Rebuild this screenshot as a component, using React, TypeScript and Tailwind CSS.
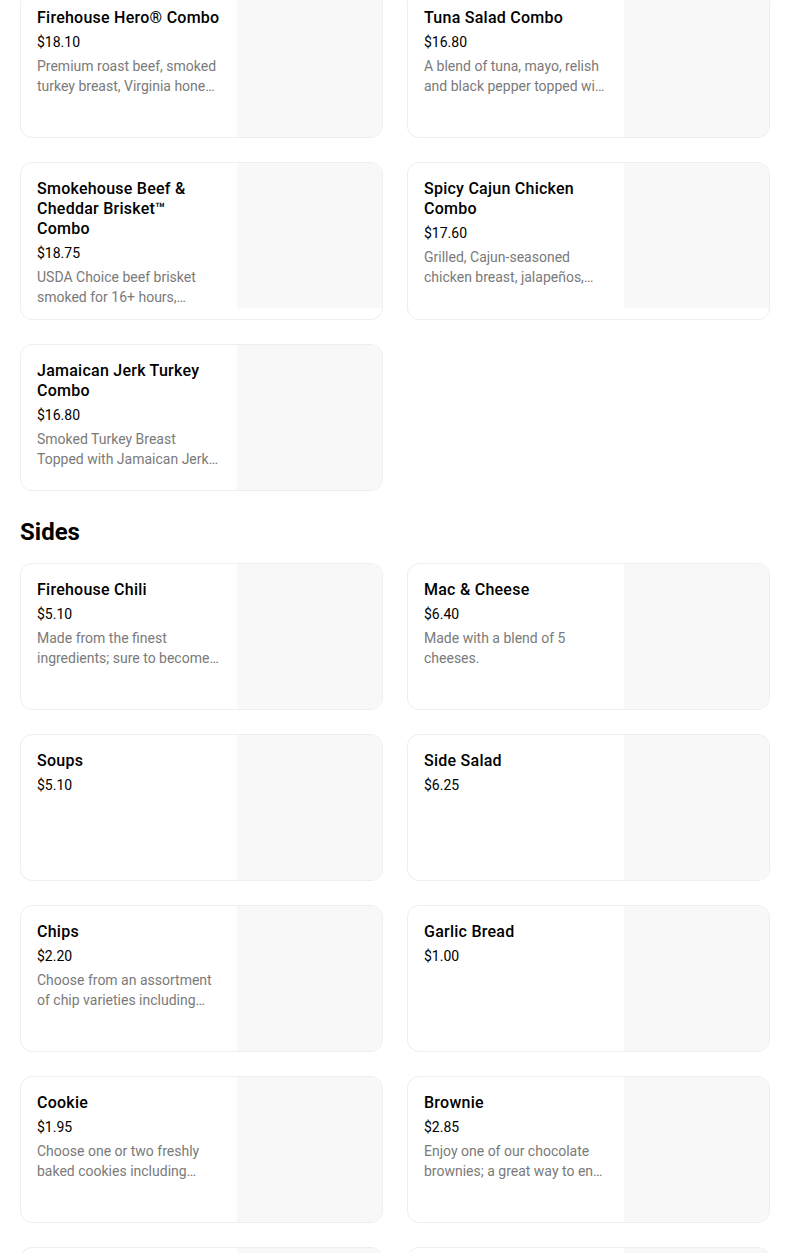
import React from "react";

type Item = { title: string; price: string; desc?: string };

const combos: Item[] = [
  { title: "Firehouse Hero® Combo", price: "$18.10", desc: "Premium roast beef, smoked turkey breast, Virginia honey ham, melted provolone, served Fully Involved." },
  { title: "Tuna Salad Combo", price: "$16.80", desc: "A blend of tuna, mayo, relish and black pepper topped with lettuce, tomato and onion." },
  { title: "Smokehouse Beef & Cheddar Brisket™ Combo", price: "$18.75", desc: "USDA Choice beef brisket smoked for 16+ hours, topped with melted cheddar." },
  { title: "Spicy Cajun Chicken Combo", price: "$17.60", desc: "Grilled, Cajun-seasoned chicken breast, jalapeños, pepper jack and more." },
  { title: "Jamaican Jerk Turkey Combo", price: "$16.80", desc: "Smoked Turkey Breast Topped with Jamaican Jerk Seasoning and more." },
];

const sides: Item[] = [
  { title: "Firehouse Chili", price: "$5.10", desc: "Made from the finest ingredients; sure to become your new favorite." },
  { title: "Mac & Cheese", price: "$6.40", desc: "Made with a blend of 5 cheeses." },
  { title: "Soups", price: "$5.10" },
  { title: "Side Salad", price: "$6.25" },
  { title: "Chips", price: "$2.20", desc: "Choose from an assortment of chip varieties including kettle cooked." },
  { title: "Garlic Bread", price: "$1.00" },
  { title: "Cookie", price: "$1.95", desc: "Choose one or two freshly baked cookies including chocolate chunk." },
  { title: "Brownie", price: "$2.85", desc: "Enjoy one of our chocolate brownies; a great way to end your meal." },
  { title: "Pickle", price: "$0.50" },
  { title: "Drink", price: "$2.90" },
];

function Card({ item }: { item: Item }) {
  return (
    <div className="flex min-h-[147px] overflow-hidden rounded-xl border border-[#eeeeee] bg-white">
      <div className="flex min-w-0 flex-1 flex-col px-4 pt-4 pb-3">
        <div className="text-[16px] font-medium leading-5 tracking-[0.25px] text-[#000000]">{item.title}</div>
        <div className="mt-1 text-[14px] leading-5 text-[#000000]">{item.price}</div>
        {item.desc && (
          <div className="mt-1 line-clamp-2 text-[14px] leading-5 text-[#7a7a7a]">{item.desc}</div>
        )}
      </div>
      <div className="h-[145px] w-[145px] shrink-0 self-start bg-[#f8f8f8]" />
    </div>
  );
}

export default function App() {
  return (
    <div
      className="h-[1253px] overflow-hidden bg-white pl-5 pr-[34px]"
      style={{ fontFamily: "Roboto, 'Noto Sans', sans-serif" }}
    >
      <div className="mt-[-9px] grid grid-cols-2 gap-6">
        {combos.map((it) => (
          <Card key={it.title} item={it} />
        ))}
      </div>
      <h2 className="mt-[25px] mb-[15px] text-[24px] font-bold leading-8 text-black">Sides</h2>
      <div className="grid grid-cols-2 gap-6">
        {sides.map((it) => (
          <Card key={it.title} item={it} />
        ))}
      </div>
    </div>
  );
}
